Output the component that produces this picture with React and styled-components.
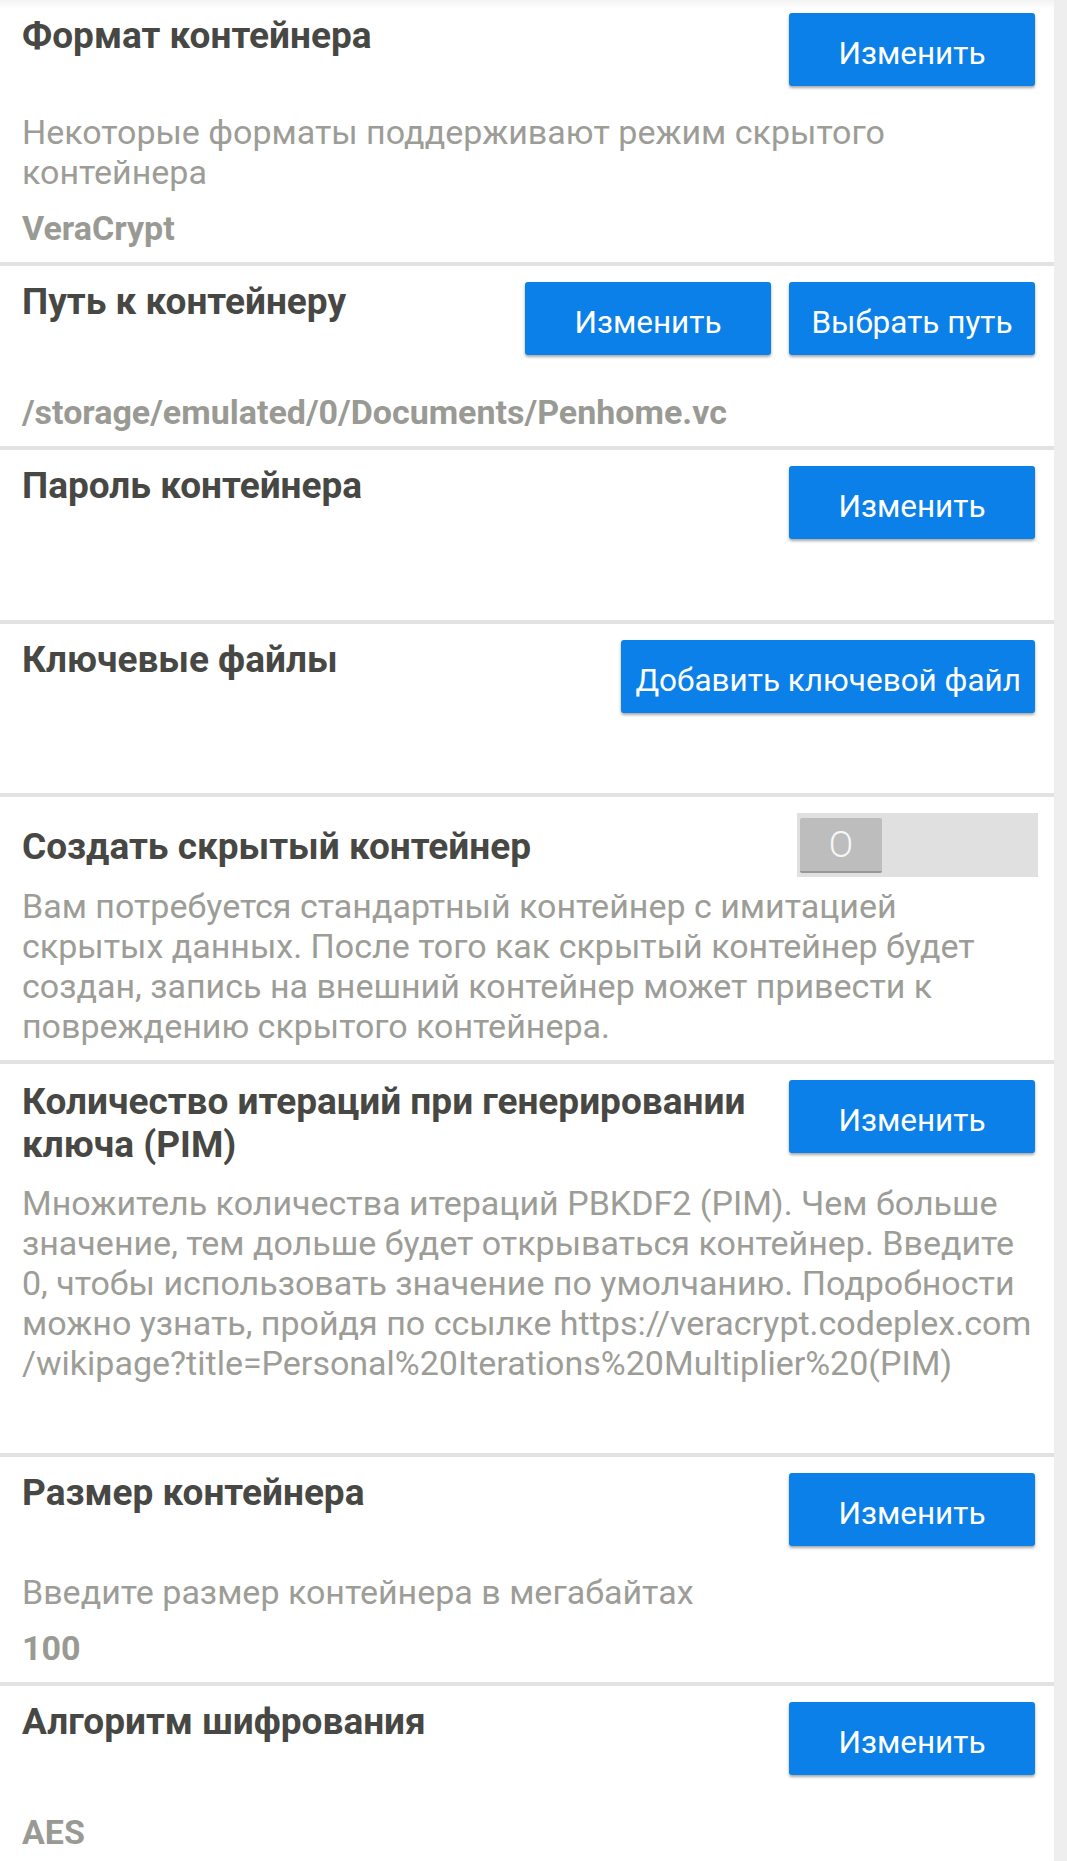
import React from 'react';
import styled, { createGlobalStyle } from 'styled-components';

const GlobalStyle = createGlobalStyle`
  html, body {
    margin: 0;
    padding: 0;
    background: #eeeeee;
  }
  body {
    font-family: Roboto, "Noto Sans", "Liberation Sans", sans-serif;
  }
`;

const Screen = styled.div`
  display: flex;
  width: 1067px;
  height: 1861px;
  overflow: hidden;
`;

const List = styled.div`
  flex: 1;
  display: flex;
  flex-direction: column;
  gap: 4px;
  background: #e2e2e2;
`;

const ScrollTrack = styled.div`
  width: 13px;
  flex-shrink: 0;
  background: #eeeeee;
`;

const Section = styled.section`
  flex-shrink: 0;
  background: ${({ $first }) =>
    $first ? 'linear-gradient(#f3f3f3, #ffffff 9px)' : '#ffffff'};
  padding: ${({ $top }) => $top ?? 16}px 19px 14px 22px;

  &:last-child {
    flex: 1;
  }
`;

const Header = styled.div`
  display: flex;
  align-items: ${({ $center }) => ($center ? 'center' : 'flex-start')};
  gap: 18px;
`;

const Title = styled.h2`
  flex: 1;
  margin: ${({ $shift }) => $shift ?? -2}px 0 0;
  font-size: 37px;
  line-height: 43px;
  font-weight: 700;
  color: #474744;
`;

const Buttons = styled.div`
  display: flex;
  gap: 18px;
  flex-shrink: 0;
`;

const ActionButton = styled.button`
  min-width: 246px;
  height: 73px;
  padding: 8px 14px 0;
  border: none;
  border-radius: 3px;
  background: #0a80e8;
  color: #ffffff;
  font-family: inherit;
  font-size: 31.5px;
  font-weight: 400;
  box-shadow: 0 2px 3px rgba(0, 0, 0, 0.35);
  cursor: pointer;
`;

const Desc = styled.p`
  margin: ${({ $gap }) => $gap ?? 26}px 0 0;
  font-size: 34px;
  line-height: 40px;
  color: #9d9d97;
`;

const Value = styled.div`
  margin-top: ${({ $gap }) => $gap ?? 16}px;
  height: 40px;
  font-size: 34px;
  line-height: 40px;
  font-weight: 700;
  color: #9a9a94;
  white-space: nowrap;
`;

const SwitchTrack = styled.div`
  width: 241px;
  height: 64px;
  margin-right: -3px;
  padding: 5px 0 4px 3px;
  box-sizing: border-box;
  background: #e0e0e0;
  flex-shrink: 0;
`;

const SwitchThumb = styled.div`
  width: 82px;
  height: 100%;
  box-sizing: border-box;
  border-radius: 2px;
  border-bottom: 2px solid #979797;
  background: #bdbdbd;
  display: flex;
  align-items: center;
  justify-content: center;
  color: #f7f7f7;
  font-size: 36px;
  font-weight: 300;
`;

function Setting({ title, buttons = [], desc, value, first, titleShift, descGap, valueGap, top }) {
  return (
    <Section $first={first} $top={top}>
      <Header>
        <Title $shift={titleShift}>{title}</Title>
        <Buttons>
          {buttons.map((b) => (
            <ActionButton key={b}>{b}</ActionButton>
          ))}
        </Buttons>
      </Header>
      {desc && <Desc $gap={descGap}>{desc}</Desc>}
      {value !== undefined && <Value $gap={valueGap}>{value}</Value>}
    </Section>
  );
}

export default function App() {
  return (
    <>
      <GlobalStyle />
      <Screen>
        <List>
          <Setting
            first
            top={13}
            titleShift={1}
            title="Формат контейнера"
            buttons={['Изменить']}
            desc="Некоторые форматы поддерживают режим скрытого контейнера"
            value="VeraCrypt"
          />
          <Setting
            title="Путь к контейнеру"
            buttons={['Изменить', 'Выбрать путь']}
            value="/storage/emulated/0/Documents/Penhome.vc"
            valueGap={37}
          />
          <Setting title="Пароль контейнера" buttons={['Изменить']} value="" valueGap={27} />
          <Setting
            title="Ключевые файлы"
            buttons={['Добавить ключевой файл']}
            value=""
            valueGap={26}
          />
          <Section>
            <Header $center>
              <Title $shift={2}>Создать скрытый контейнер</Title>
              <SwitchTrack>
                <SwitchThumb>O</SwitchThumb>
              </SwitchTrack>
            </Header>
            <Desc $gap={9}>
              Вам потребуется стандартный контейнер с имитацией скрытых данных. После того как
              скрытый контейнер будет создан, запись на внешний контейнер может привести к
              повреждению скрытого контейнера.
            </Desc>
          </Section>
          <Setting
            title="Количество итераций при генерировании ключа (PIM)"
            buttons={['Изменить']}
            titleShift={0}
            descGap={17}
            desc={
              <>
                Множитель количества итераций PBKDF2 (PIM). Чем больше значение, тем дольше будет
                открываться контейнер. Введите 0, чтобы использовать значение по умолчанию.
                Подробности можно узнать, пройдя по ссылке https://veracrypt.codeplex.com
                <wbr />
                /wikipage?title=Personal%20Iterations%20Multiplier%20(PIM)
              </>
            }
            value=""
          />
          <Setting
            title="Размер контейнера"
            buttons={['Изменить']}
            desc="Введите размер контейнера в мегабайтах"
            value="100"
          />
          <Setting
            title="Алгоритм шифрования"
            buttons={['Изменить']}
            value="AES"
            valueGap={37}
          />
        </List>
        <ScrollTrack />
      </Screen>
    </>
  );
}
